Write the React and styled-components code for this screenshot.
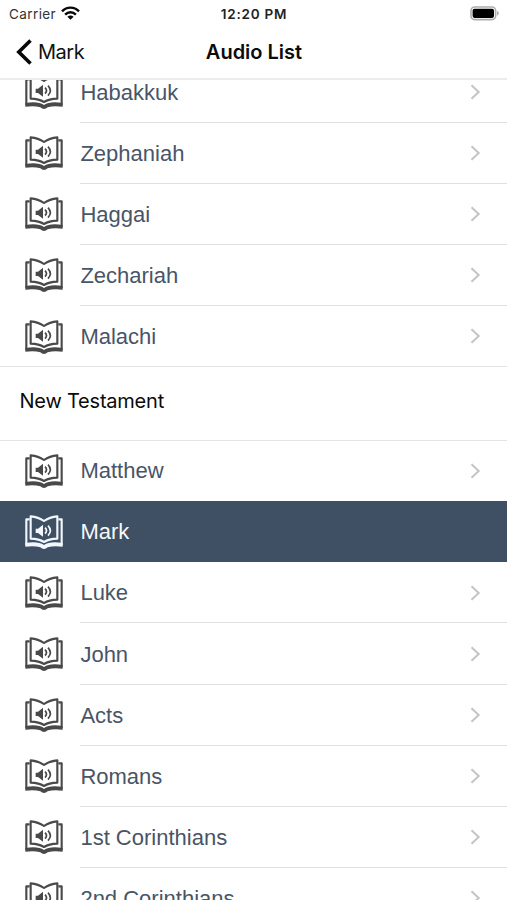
import React from 'react';
import styled, { createGlobalStyle } from 'styled-components';

const GlobalStyle = createGlobalStyle`
  * { box-sizing: border-box; }
  html, body { margin: 0; background: #fff; overflow: hidden; }
`;

const Screen = styled.div`
  display: flex;
  flex-direction: column;
  width: 507px;
  height: 900px;
  overflow: hidden;
  background: #fff;
  color: #0b0b0b;
  font-family: Inter, sans-serif;
`;

const StatusBar = styled.div`
  display: grid;
  grid-template-columns: 1fr auto 1fr;
  align-items: center;
  flex: none;
  height: 27px;
  padding: 0 8px 0 9px;
`;

const Carrier = styled.div`
  display: flex;
  align-items: center;
  gap: 5px;
  font-size: 13.5px;
  letter-spacing: 0.4px;
  color: #333;
`;

const Clock = styled.div`
  font-size: 13.5px;
  font-weight: 600;
  letter-spacing: 0.75px;
  color: #222;
`;

const BatterySlot = styled.div`
  display: flex;
  justify-content: flex-end;
`;

const NavBar = styled.header`
  display: grid;
  grid-template-columns: 1fr auto 1fr;
  align-items: center;
  flex: none;
  height: 53px;
  padding: 0 15px 1px 16px;
  border-bottom: 2px solid #ececec;
`;

const BackButton = styled.button`
  display: flex;
  align-items: center;
  gap: 5px;
  padding: 0;
  border: 0;
  background: none;
  color: #111;
  font: 400 20px Inter, sans-serif;
  letter-spacing: -0.5px;
`;

const Title = styled.h1`
  margin: 0;
  font-size: 20px;
  font-weight: 600;
  letter-spacing: 0;
`;

const ListViewport = styled.main`
  flex: 1;
  min-height: 0;
  overflow: hidden;
`;

const OldTestament = styled.div`
  margin-top: -18.5px;
`;

const Row = styled.div`
  display: flex;
  align-items: stretch;
  height: ${(p) => (p.$first ? '60.6px' : '61.1px')};
  padding-left: 24.6px;
  background: ${(p) => (p.$selected ? '#405064' : '#fff')};
  color: ${(p) => (p.$selected ? '#f5f8fb' : '#485567')};
`;

const IconCell = styled.div`
  display: flex;
  align-items: center;
  flex: none;
  width: 55.8px;
  padding-top: 0.3px;
  color: ${(p) => (p.$selected ? '#f1f7fd' : '#494949')};
`;

const RowBody = styled.div`
  display: flex;
  align-items: center;
  justify-content: space-between;
  flex: 1;
  padding: 2px 26px 0 0;
  border-bottom: 1px solid ${(p) => (p.$plain ? 'transparent' : '#dfdfe1')};
  font: 22px "Liberation Sans", Arial, sans-serif;

  svg {
    margin-bottom: 1px;
  }
`;

const SectionHeader = styled.h2`
  display: flex;
  align-items: center;
  height: 74.6px;
  margin: -0.9px 0 0;
  padding: 0 19.5px 4.6px;
  border-top: 1px solid #e4e4e4;
  border-bottom: 1px solid #e4e4e4;
  font-size: 20px;
  font-weight: 400;
  letter-spacing: -0.22px;
`;

const WifiIcon = () => (
  <svg width="19" height="15" viewBox="0 -1 19 15" fill="none" stroke="#080808" strokeWidth="2.4">
    <path d="M1 4.4C5.8 -.6 13.2 -.6 18 4.4M4.1 7.6C7.2 4.5 11.8 4.5 14.9 7.6" />
    <path d="M9.5 12.8L6.4 9.7C8.1 8.2 10.9 8.2 12.6 9.7Z" fill="#080808" stroke="none" />
  </svg>
);

const BatteryIcon = () => (
  <svg width="30" height="15" viewBox="0 0 30 15">
    <rect x="2" y="1" width="24.6" height="12.6" rx="3.6" fill="#fff" stroke="#adadad" strokeWidth="1.6" />
    <rect x="3.6" y="2.7" width="21.4" height="9.2" rx="1.8" fill="#000" />
    <path d="M28 5C30.3 5.7 30.3 9 28 9.7Z" fill="#adadad" />
  </svg>
);

const BackIcon = () => (
  <svg width="17" height="26" viewBox="0 0 17 26" fill="none" stroke="#080808" strokeWidth="3.6">
    <path d="M14.5 1.5L2.8 13L14.5 24.5" />
  </svg>
);

const Chevron = () => (
  <svg width="11" height="16" viewBox="0 0 11 16" fill="none" stroke="#c4c4c6" strokeWidth="2">
    <path d="M1.5 1.2L8.7 8L1.5 14.8" />
  </svg>
);

const AudioBookIcon = () => (
  <svg
    width="38"
    height="34"
    viewBox="0 0 114 102"
    fill="none"
    stroke="currentColor"
    strokeWidth="6.4"
    strokeLinejoin="round"
  >
    <path d="M14 13H4V90M100 13H110V90" />
    <path d="M57 18Q40 6 17 4V71Q42 72 57 81Q72 72 97 71V4Q74 6 57 18Z" />
    <path
      d="M1 84Q40 78 57 90Q74 78 113 84V95Q86 91 68 97Q63 102 57 102Q51 102 46 97Q28 91 1 95Z"
      fill="currentColor"
      stroke="none"
    />
    <path d="M32 41H39L54 29V65L39 54H32Z" fill="currentColor" stroke="none" />
    <path d="M60 38Q69 47 60 56M69 32Q83 47 69 62" strokeWidth="5" />
  </svg>
);

const BookRow = ({ name, selected = false, plain = false, first = false }) => (
  <Row $selected={selected} $first={first}>
    <IconCell $selected={selected}>
      <AudioBookIcon />
    </IconCell>
    <RowBody $plain={plain || selected}>
      {name}
      {!selected && <Chevron />}
    </RowBody>
  </Row>
);

const oldBooks = ['Habakkuk', 'Zephaniah', 'Haggai', 'Zechariah', 'Malachi'];
const newBooks = ['Matthew', 'Mark', 'Luke', 'John', 'Acts', 'Romans', '1st Corinthians', '2nd Corinthians'];

export default function App() {
  return (
    <Screen>
      <GlobalStyle />
      <StatusBar>
        <Carrier>
          Carrier
          <WifiIcon />
        </Carrier>
        <Clock>12:20 PM</Clock>
        <BatterySlot>
          <BatteryIcon />
        </BatterySlot>
      </StatusBar>
      <NavBar>
        <BackButton>
          <BackIcon />
          Mark
        </BackButton>
        <Title>Audio List</Title>
      </NavBar>
      <ListViewport>
        <OldTestament>
          {oldBooks.map((name, i) => (
            <BookRow key={name} name={name} plain={i === oldBooks.length - 1} />
          ))}
        </OldTestament>
        <SectionHeader>New Testament</SectionHeader>
        {newBooks.map((name, i) => (
          <BookRow
            key={name}
            name={name}
            first={i === 0}
            selected={name === 'Mark'}
            plain={newBooks[i + 1] === 'Mark'}
          />
        ))}
      </ListViewport>
    </Screen>
  );
}
